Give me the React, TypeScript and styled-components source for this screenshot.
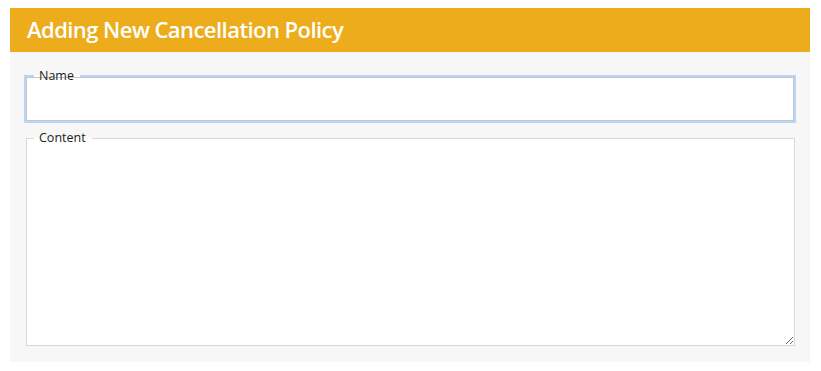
import React from "react";
import styled, { createGlobalStyle } from "styled-components";

const Global = createGlobalStyle`
  html, body { margin: 0; padding: 0; background: #ffffff; }
  body { font-family: "Open Sans", "Noto Sans", sans-serif; }
  * { box-sizing: border-box; }
`;

const Page = styled.div`
  padding: 8px 11px 9px 10px;
`;

const Dialog = styled.section`
  width: 800px;
  display: flex;
  flex-direction: column;
`;

const Header = styled.header`
  height: 44px;
  background: #edac1b;
  display: flex;
  align-items: center;
  padding: 0 0 2px 17px;
`;

const Title = styled.h1`
  margin: 0;
  color: #ffffff;
  font-family: "Open Sans", sans-serif;
  font-weight: 600;
  font-size: 22px;
  letter-spacing: -0.55px;
`;

const Body = styled.div`
  background: #f7f7f7;
  padding: 17px 15px 16px 16px;
  display: flex;
  flex-direction: column;
  gap: 7px;
`;

const Field = styled.fieldset<{ $focused?: boolean }>`
  margin: ${(p) => (p.$focused ? "-1px -1px 0 -2px" : "0")};
  padding: 0;
  min-width: 0;
  border: ${(p) => (p.$focused ? "2px solid #b8d6f6" : "1px solid #d9d9d9")};
  background: #ffffff;
  box-shadow: ${(p) => (p.$focused ? "inset 0 0 0 1px #c6c6c6" : "none")};
  display: flex;
  flex-direction: column;
`;

const Legend = styled.legend<{ $focused?: boolean }>`
  margin-left: ${(p) => (p.$focused ? "8px" : "7px")};
  padding: 0 6px 0 5px;
  font-family: "Open Sans", sans-serif;
  font-size: 12.5px;
  line-height: 16px;
  color: #1c1c1c;
`;

const TextInput = styled.input`
  display: block;
  width: 100%;
  height: 37px;
  border: none;
  outline: none;
  background: transparent;
  margin: 0;
  padding: 0 8px;
  font: inherit;
`;

const TextArea = styled.textarea`
  display: block;
  width: 100%;
  height: 199px;
  border: none;
  outline: none;
  background: #ffffff;
  margin: 0;
  padding: 4px 8px;
  resize: vertical;
  font: inherit;
`;

export default function App() {
  return (
    <>
      <Global />
      <Page>
        <Dialog>
          <Header>
            <Title>Adding New Cancellation Policy</Title>
          </Header>
          <Body>
            <Field $focused>
              <Legend $focused>Name</Legend>
              <TextInput type="text" />
            </Field>
            <Field>
              <Legend>Content</Legend>
              <TextArea />
            </Field>
          </Body>
        </Dialog>
      </Page>
    </>
  );
}
